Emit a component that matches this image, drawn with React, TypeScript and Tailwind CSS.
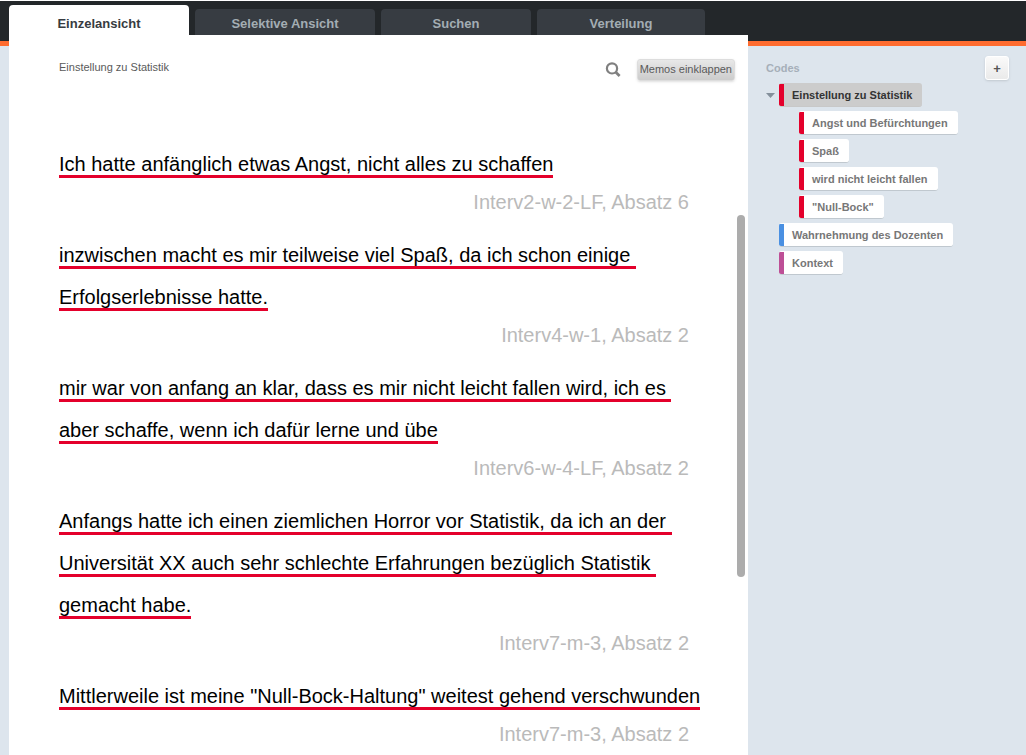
import { useState } from "react";

import clsx from "clsx";

interface Quote {
	text: string;
	source: string;
}

interface Code {
	label: string;
	bar: string;
	children?: Code[];
}

const tabs = [
	{ label: "Einzelansicht", width: "w-[180px]" },
	{ label: "Selektive Ansicht", width: "w-[180px]" },
	{ label: "Suchen", width: "w-[150px]" },
	{ label: "Verteilung", width: "w-[168px]" },
];

const quotes: Quote[] = [
	{
		text: "Ich hatte anfänglich etwas Angst, nicht alles zu schaffen",
		source: "Interv2-w-2-LF, Absatz 6",
	},
	{
		text: "inzwischen macht es mir teilweise viel Spaß, da ich schon einige \nErfolgserlebnisse hatte.",
		source: "Interv4-w-1, Absatz 2",
	},
	{
		text: "mir war von anfang an klar, dass es mir nicht leicht fallen wird, ich es \naber schaffe, wenn ich dafür lerne und übe",
		source: "Interv6-w-4-LF, Absatz 2",
	},
	{
		text: "Anfangs hatte ich einen ziemlichen Horror vor Statistik, da ich an der \nUniversität XX auch sehr schlechte Erfahrungen bezüglich Statistik \ngemacht habe.",
		source: "Interv7-m-3, Absatz 2",
	},
	{
		text: 'Mittlerweile ist meine "Null-Bock-Haltung" weitest gehend verschwunden',
		source: "Interv7-m-3, Absatz 2",
	},
];

const codes: Code[] = [
	{
		label: "Einstellung zu Statistik",
		bar: "bg-[#e4002b]",
		children: [
			{ label: "Angst und Befürchtungen", bar: "bg-[#e4002b]" },
			{ label: "Spaß", bar: "bg-[#e4002b]" },
			{ label: "wird nicht leicht fallen", bar: "bg-[#e4002b]" },
			{ label: '"Null-Bock"', bar: "bg-[#e4002b]" },
		],
	},
	{ label: "Wahrnehmung des Dozenten", bar: "bg-[#4a90e2]" },
	{ label: "Kontext", bar: "bg-[#bd4f96]" },
];

const SearchIcon = () => (
	<svg viewBox="0 0 16 16" className="size-4" fill="none" stroke="#808080">
		<circle cx="7" cy="6.4" r="5.1" strokeWidth="2.2" />
		<path d="M10.6 10L14.6 14" strokeWidth="2.8" />
	</svg>
);

const Tabs = ({
	active,
	onSelect,
}: {
	active: string;
	onSelect: (label: string) => void;
}) => (
	<nav className="flex h-[34px] items-end gap-1.5 pl-[9px]">
		{tabs.map((tab) => (
			<button
				key={tab.label}
				type="button"
				onClick={() => onSelect(tab.label)}
				className={clsx(
					"rounded-t text-[13px] font-bold",
					tab.width,
					tab.label === active
						? "h-[30px] bg-white pt-2 text-[#373b41]"
						: "h-[26px] bg-[#373c42] pt-1 text-[#a3adb3]"
				)}
			>
				{tab.label}
			</button>
		))}
	</nav>
);

const QuoteItem = ({ quote }: { quote: Quote }) => (
	<article className="mb-[15px]">
		<p className="leading-[42px] whitespace-pre-wrap text-black">
			<span className="border-b-[3px] border-[#e4002b]">{quote.text}</span>
		</p>
		<p className="pr-8 text-right leading-[34px] text-[#bababa]">
			{quote.source}
		</p>
	</article>
);

const CodePill = ({
	code,
	selected,
	onSelect,
}: {
	code: Code;
	selected: string;
	onSelect: (label: string) => void;
}) => (
	<button
		type="button"
		onClick={() => onSelect(code.label)}
		className={clsx(
			"flex h-6 items-center overflow-hidden rounded-[3px] border-b pt-px pr-2.5 text-[11px] font-bold",
			code.label === selected
				? "border-[#c8c8c8] bg-[#cccccc] text-[#333333]"
				: "border-[#c0c8cf] bg-white text-[#777777]"
		)}
	>
		<span className={clsx("mr-2 h-[22px] w-[5px]", code.bar)} />
		{code.label}
	</button>
);

const CodeTree = () => {
	const [selected, setSelected] = useState("Einstellung zu Statistik");
	const [open, setOpen] = useState(true);

	return (
		<ul className="flex flex-col gap-1">
			{codes.map((code) => (
				<li key={code.label}>
					<div className="flex items-center">
						<div className="flex w-[13px] shrink-0">
							{code.children ? (
								<button
									type="button"
									aria-label="Untercodes umschalten"
									aria-expanded={open}
									onClick={() => setOpen(!open)}
								>
									<svg viewBox="0 0 9 5" className="h-[5px] w-[9px]">
										<path d="M0 0H9L4.5 5Z" fill="#84909b" />
									</svg>
								</button>
							) : null}
						</div>
						<CodePill code={code} selected={selected} onSelect={setSelected} />
					</div>
					{code.children && open ? (
						<ul className="mt-1 ml-[33px] flex flex-col items-start gap-1">
							{code.children.map((child) => (
								<li key={child.label}>
									<CodePill
										code={child}
										selected={selected}
										onSelect={setSelected}
									/>
								</li>
							))}
						</ul>
					) : null}
				</li>
			))}
		</ul>
	);
};

export default function App() {
	const [active, setActive] = useState("Einzelansicht");

	return (
		<div className="flex h-screen flex-col overflow-hidden border-t border-white bg-[#dde5ed] font-['Liberation_Sans',Arial,sans-serif]">
			<header className="h-[45px] shrink-0 border-b-[5px] border-[#ff6c2f] bg-[#23272a]">
				<Tabs active={active} onSelect={setActive} />
			</header>

			<div className="-mt-[11px] flex min-h-0 flex-1 pl-[9px]">
				<main className="flex min-w-0 flex-1 overflow-hidden bg-white pr-[3px] pl-[50px]">
					<div className="min-w-0 flex-1">
						<div className="flex h-[69px] items-center justify-between pr-0.5">
							<h1 className="pb-1 text-[11px] text-[#5a5a5a]">
								Einstellung zu Statistik
							</h1>
							<div className="flex items-center gap-4">
								<button type="button" aria-label="Suchen">
									<SearchIcon />
								</button>
								<button
									type="button"
									className="h-[22px] rounded-[3px] border border-[#dddddd] bg-linear-to-b from-[#e8e8e8] to-[#cccccc] px-0.5 text-[11px] text-[#5a5a5a] shadow-sm"
								>
									Memos einklappen
								</button>
							</div>
						</div>
						<div className="mt-[39px] pr-4 text-[20px]">
							{quotes.map((quote) => (
								<QuoteItem key={quote.text} quote={quote} />
							))}
						</div>
					</div>
					<div className="mt-[180px] h-[362px] w-2 shrink-0 rounded-full bg-[#acacac]" />
				</main>

				<aside className="w-[278px] shrink-0 pt-[21px] pr-[17px] pl-[18px]">
					<div className="flex h-[27px] items-start justify-between">
						<h2 className="pt-1 text-[11px] font-bold text-[#a6afb9]">
							Codes
						</h2>
						<button
							type="button"
							aria-label="Code hinzufügen"
							className="flex size-6 items-center justify-center rounded-[3px] border border-white bg-linear-to-b from-[#fafafa] to-[#eaeaea] pt-0.5 text-[13px] font-bold text-[#555555] shadow-sm"
						>
							+
						</button>
					</div>
					<CodeTree />
				</aside>
			</div>
		</div>
	);
}
